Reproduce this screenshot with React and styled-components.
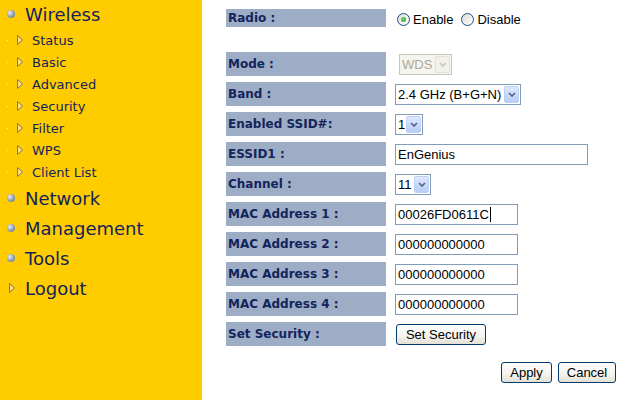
import styled, { createGlobalStyle } from "styled-components"

const Global = createGlobalStyle`
  html, body { margin: 0; padding: 0; background: #fff; }
  body { font-family: "DejaVu Sans", Verdana, sans-serif; }
`

const Page = styled.div`
  display: flex;
  width: 636px;
  height: 400px;
  overflow: hidden;
`

/* ---------- sidebar ---------- */
const Side = styled.nav`
  width: 202px;
  flex-shrink: 0;
  background: #ffcc00;
  display: flex;
  flex-direction: column;
  padding-top: 0;
  margin-top: -1px;
`
const MainItem = styled.div`
  height: 30px;
  display: flex;
  align-items: center;
  gap: 10px;
  padding-left: ${(p) => (p.$arrow ? 9 : 7)}px;
  font-size: 18px;
  color: #13235b;
`
const Ball = styled.span`
  width: 8px;
  height: 8px;
  border-radius: 50%;
  background: radial-gradient(circle at 35% 35%, #eef1f5 0%, #9aa8bb 45%, #5d6b82 100%);
`
const SubItem = styled.div`
  height: 22px;
  display: flex;
  align-items: center;
  gap: 9px;
  padding-left: 7px;
  font-size: 13px;
  color: #13235b;
`
const Dot = styled.span`
  width: 1px;
  height: 1px;
  background: #fff3b0;
`

const Tri = () => (
  <svg width="6" height="10" viewBox="0 0 6 10">
    <polygon points="0.5,0.5 5.5,5 0.5,9.5" fill="#ffe27a" stroke="#7a7668" strokeWidth="1" />
  </svg>
)

/* ---------- form ---------- */
const Main = styled.main`
  flex: 1;
  padding: 9px 20px 0 24px;
  display: flex;
  flex-direction: column;
`
const Form = styled.div`
  display: grid;
  grid-template-columns: 160px 1fr;
  column-gap: 9px;
  row-gap: 6px;
`
const Label = styled.div`
  height: ${(p) => (p.$short ? 18 : 24)}px;
  background: #9dadc6;
  color: #14245a;
  font-weight: bold;
  font-size: 12px;
  display: flex;
  align-items: center;
  padding-left: 2px;
`
const Cell = styled.div`
  display: flex;
  align-items: center;
  padding-left: ${(p) => p.$indent || 0}px;
  font-family: "Liberation Sans", Arial, sans-serif;
  font-size: 13px;
  color: #000;
`
const Spacer = styled.div`
  grid-column: 1 / -1;
  height: 13px;
`
const RadioWrap = styled.label`
  display: flex;
  align-items: center;
  gap: 3px;
  margin-right: 8px;
  margin-top: 3px;
`
const RadioCircle = styled.span`
  width: 13px;
  height: 13px;
  box-sizing: border-box;
  border-radius: 50%;
  border: 1px solid #1c5180;
  background: linear-gradient(135deg, #dcdcd4, #ffffff);
  display: flex;
  align-items: center;
  justify-content: center;
  &::after {
    content: "";
    display: ${(p) => (p.$on ? "block" : "none")};
    width: 5px;
    height: 5px;
    border-radius: 50%;
    background: radial-gradient(circle at 40% 40%, #6fd36f, #21a121);
  }
`
const Box = styled.div`
  width: ${(p) => p.$w}px;
  height: 21px;
  box-sizing: border-box;
  border: 1px solid ${(p) => (p.$off ? "#c9c7ba" : "#7f9db9")};
  background: ${(p) => (p.$off ? "#f5f4ee" : "#fff")};
  color: ${(p) => (p.$off ? "#aca899" : "#000")};
  display: flex;
  align-items: center;
  padding-left: 2px;
  font-size: 13px;
`
const BoxText = styled.span`
  flex: 1;
  white-space: nowrap;
`
const DropBtn = styled.span`
  width: 15px;
  height: 17px;
  margin-right: 1px;
  box-sizing: border-box;
  border-radius: 2px;
  border: 1px solid ${(p) => (p.$off ? "#e2e0d8" : "#c0d0f5")};
  background: ${(p) => (p.$off ? "#f2f1ec" : "linear-gradient(#dfe8fd, #b8ccf8)")};
  display: flex;
  align-items: center;
  justify-content: center;
`
const Caret = styled.span`
  width: 1px;
  height: 15px;
  background: #000;
  margin-left: 1px;
`
const Button = styled.button`
  height: 21px;
  padding: 0;
  width: ${(p) => p.$w}px;
  border: 1px solid #003c74;
  border-radius: 3px;
  background: linear-gradient(#ffffff, #f3f2ec 60%, #e3e0d4);
  font-family: "Liberation Sans", Arial, sans-serif;
  font-size: 13px;
  color: #000;
`
const Actions = styled.div`
  display: flex;
  justify-content: flex-end;
  gap: 6px;
  margin-top: 16px;
`

const Chevron = ({ off }) => (
  <svg width="8" height="5" viewBox="0 0 8 5">
    <polyline points="1,1 4,4 7,1" fill="none" stroke={off ? "#c9c7ba" : "#4d6185"} strokeWidth="1.6" />
  </svg>
)

function Select({ w, value, off }) {
  return (
    <Box $w={w} $off={off}>
      <BoxText>{value}</BoxText>
      <DropBtn $off={off}><Chevron off={off} /></DropBtn>
    </Box>
  )
}

function TextBox({ w, value, caret }) {
  return (
    <Box $w={w}>
      {value}
      {caret && <Caret />}
    </Box>
  )
}

const subs = ["Status", "Basic", "Advanced", "Security", "Filter", "WPS", "Client List"]

export default function App() {
  return (
    <>
      <Global />
      <Page>
        <Side>
          <MainItem><Ball />Wireless</MainItem>
          {subs.map((s) => (
            <SubItem key={s}><Dot /><Tri />{s}</SubItem>
          ))}
          <MainItem><Ball />Network</MainItem>
          <MainItem><Ball />Management</MainItem>
          <MainItem><Ball />Tools</MainItem>
          <MainItem $arrow><Tri />Logout</MainItem>
        </Side>
        <Main>
          <Form>
            <Label $short>Radio :</Label>
            <Cell $indent={2}>
              <RadioWrap><RadioCircle $on />Enable</RadioWrap>
              <RadioWrap><RadioCircle />Disable</RadioWrap>
            </Cell>
            <Spacer />
            <Label>Mode :</Label>
            <Cell $indent={4}><Select w={53} value="WDS" off /></Cell>
            <Label>Band :</Label>
            <Cell><Select w={126} value="2.4 GHz (B+G+N)" /></Cell>
            <Label>Enabled SSID#:</Label>
            <Cell><Select w={28} value="1" /></Cell>
            <Label>ESSID1 :</Label>
            <Cell><TextBox w={193} value="EnGenius" /></Cell>
            <Label>Channel :</Label>
            <Cell><Select w={36} value="11" /></Cell>
            <Label>MAC Address 1 :</Label>
            <Cell><TextBox w={123} value="00026FD0611C" caret /></Cell>
            <Label>MAC Address 2 :</Label>
            <Cell><TextBox w={123} value="000000000000" /></Cell>
            <Label>MAC Address 3 :</Label>
            <Cell><TextBox w={123} value="000000000000" /></Cell>
            <Label>MAC Address 4 :</Label>
            <Cell><TextBox w={123} value="000000000000" /></Cell>
            <Label>Set Security :</Label>
            <Cell $indent={1}><Button $w={90}>Set Security</Button></Cell>
          </Form>
          <Actions>
            <Button $w={51}>Apply</Button>
            <Button $w={58}>Cancel</Button>
          </Actions>
        </Main>
      </Page>
    </>
  )
}
